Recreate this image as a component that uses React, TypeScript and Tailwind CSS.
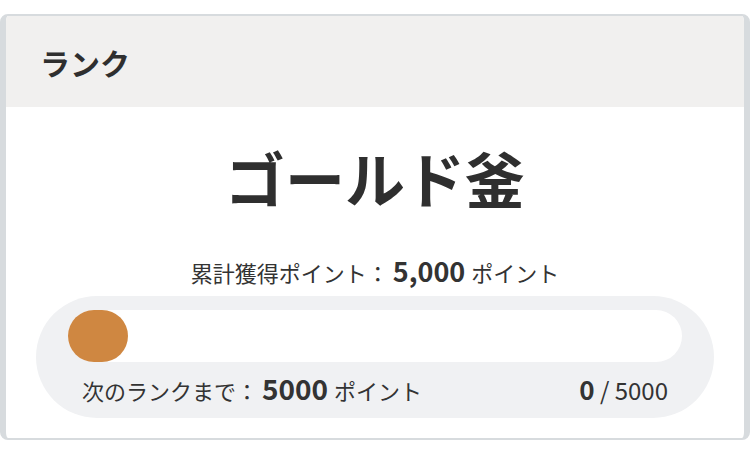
const jp = "font-['Noto_Sans_CJK_JP',sans-serif]"

export default function App() {
  const current = 0
  const target = 5000
  return (
    <div className={`w-[750px] h-[450px] bg-white pt-[14px] ${jp} text-[#333]`}>
      <div className="h-[426px] rounded-lg border-x-[6px] border-y-2 border-[#d7dbde] overflow-hidden flex flex-col bg-white">
        <div className="h-[91px] shrink-0 bg-[#f1f0ef] flex items-center pl-[34px]">
          <h2 className="text-[30px] font-bold text-[#2f2f2f] leading-none">ランク</h2>
        </div>
        <div className="flex flex-col items-center">
          <p className="mt-[40px] text-[60px] font-bold leading-none text-[#2f2f2f]">
            ゴールド釜
          </p>
          <p className="mt-[50px] text-[22px] leading-none flex items-baseline">
            <span>累計獲得ポイント：</span>
            <span className="ml-[4px] mr-[6px] text-[27px] font-bold">5,000</span>
            <span>ポイント</span>
          </p>
        </div>
        <div className="mt-[12px] mx-[30px] h-[122px] rounded-full bg-[#f0f1f3] pt-[14px] pl-[32px] pr-[32px]">
          <div className="h-[52px] rounded-full bg-white">
            <div
              className="h-full rounded-full bg-[#cf8741]"
              style={{ width: Math.max(60, (current / target) * 614) }}
            />
          </div>
          <div className="mt-[12px] flex items-baseline justify-between pl-[14px] pr-[14px]">
            <p className="text-[22px] leading-none flex items-baseline">
              <span>次のランクまで：</span>
              <span className="ml-[4px] mr-[6px] text-[28px] font-bold">5000</span>
              <span>ポイント</span>
            </p>
            <p className="text-[24px] leading-none">
              <span className="font-bold text-[26px]">{current}</span>
              <span> / {target}</span>
            </p>
          </div>
        </div>
      </div>
    </div>
  )
}
